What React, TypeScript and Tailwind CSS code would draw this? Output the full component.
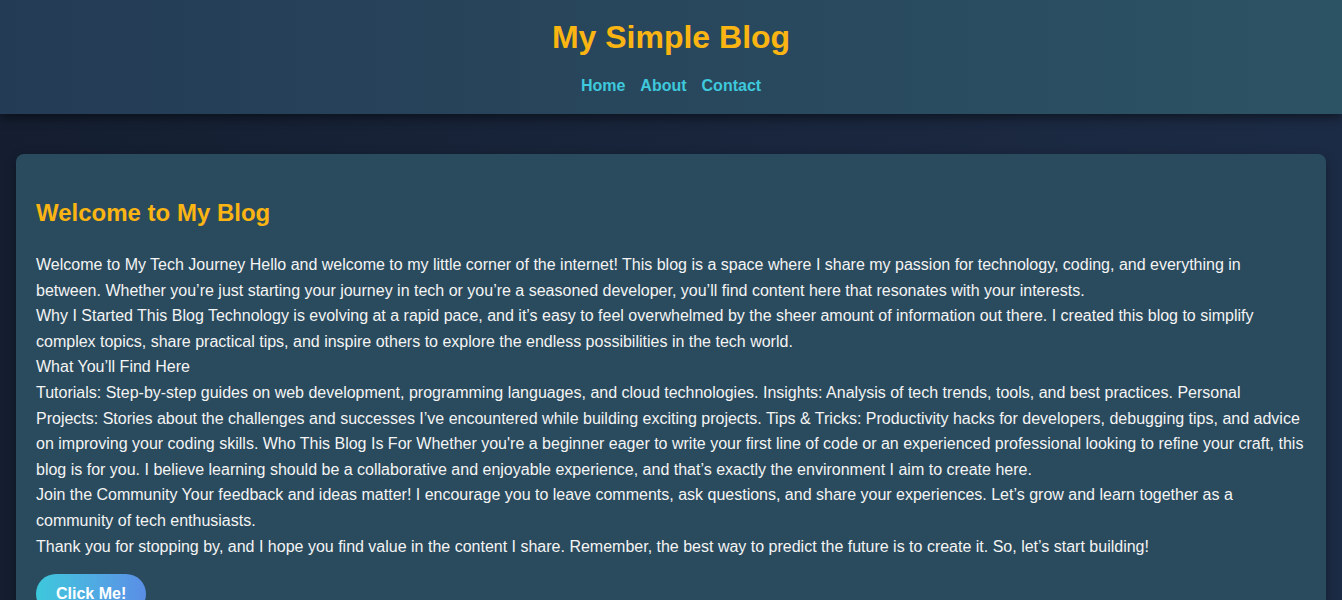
const paragraphs = [
  "Welcome to My Tech Journey Hello and welcome to my little corner of the internet! This blog is a space where I share my passion for technology, coding, and everything in between. Whether you’re just starting your journey in tech or you’re a seasoned developer, you’ll find content here that resonates with your interests.",
  "Why I Started This Blog Technology is evolving at a rapid pace, and it’s easy to feel overwhelmed by the sheer amount of information out there. I created this blog to simplify complex topics, share practical tips, and inspire others to explore the endless possibilities in the tech world.",
  "What You’ll Find Here",
  "Tutorials: Step-by-step guides on web development, programming languages, and cloud technologies. Insights: Analysis of tech trends, tools, and best practices. Personal Projects: Stories about the challenges and successes I’ve encountered while building exciting projects. Tips & Tricks: Productivity hacks for developers, debugging tips, and advice on improving your coding skills. Who This Blog Is For Whether you're a beginner eager to write your first line of code or an experienced professional looking to refine your craft, this blog is for you. I believe learning should be a collaborative and enjoyable experience, and that’s exactly the environment I aim to create here.",
  "Join the Community Your feedback and ideas matter! I encourage you to leave comments, ask questions, and share your experiences. Let’s grow and learn together as a community of tech enthusiasts.",
  "Thank you for stopping by, and I hope you find value in the content I share. Remember, the best way to predict the future is to create it. So, let’s start building!",
];

const App = () => {
  return (
    <div className="min-h-screen bg-gradient-to-r from-[#141e30] to-[#1c2b45] font-['Liberation_Sans',Arial,sans-serif] text-[#f4f4f4]">
      <header className="relative z-10 flex flex-col items-center bg-gradient-to-r from-[#243b55] to-[#2c5364] pt-[18px] pb-[15px] shadow-[0_4px_10px_rgba(0,0,0,0.45)]">
        <h1 className="text-[32px] leading-[38px] font-bold text-[#fbb513]">
          My Simple Blog
        </h1>
        <nav className="mt-[17px] flex gap-[15px] text-base leading-[26px] font-bold text-[#3ec9dc]">
          <a href="#">Home</a>
          <a href="#">About</a>
          <a href="#">Contact</a>
        </nav>
      </header>
      <main className="px-4 pt-10 pb-10">
        <section className="rounded-lg bg-[#2a4b5e] p-5 shadow-[0_4px_12px_rgba(0,0,0,0.3)]">
          <h2 className="my-5 text-2xl leading-[38px] font-bold text-[#fbb513]">
            Welcome to My Blog
          </h2>
          <div className="text-base leading-[25.6px]">
            {paragraphs.map((p, i) => (
              <p key={i}>{p}</p>
            ))}
          </div>
          <button className="mt-[15px] rounded-full bg-gradient-to-r from-[#3cc8dc] to-[#5a8ee6] px-5 py-[9px] text-base leading-[22px] font-bold text-white">
            Click Me!
          </button>
        </section>
      </main>
    </div>
  );
};

export default App;
